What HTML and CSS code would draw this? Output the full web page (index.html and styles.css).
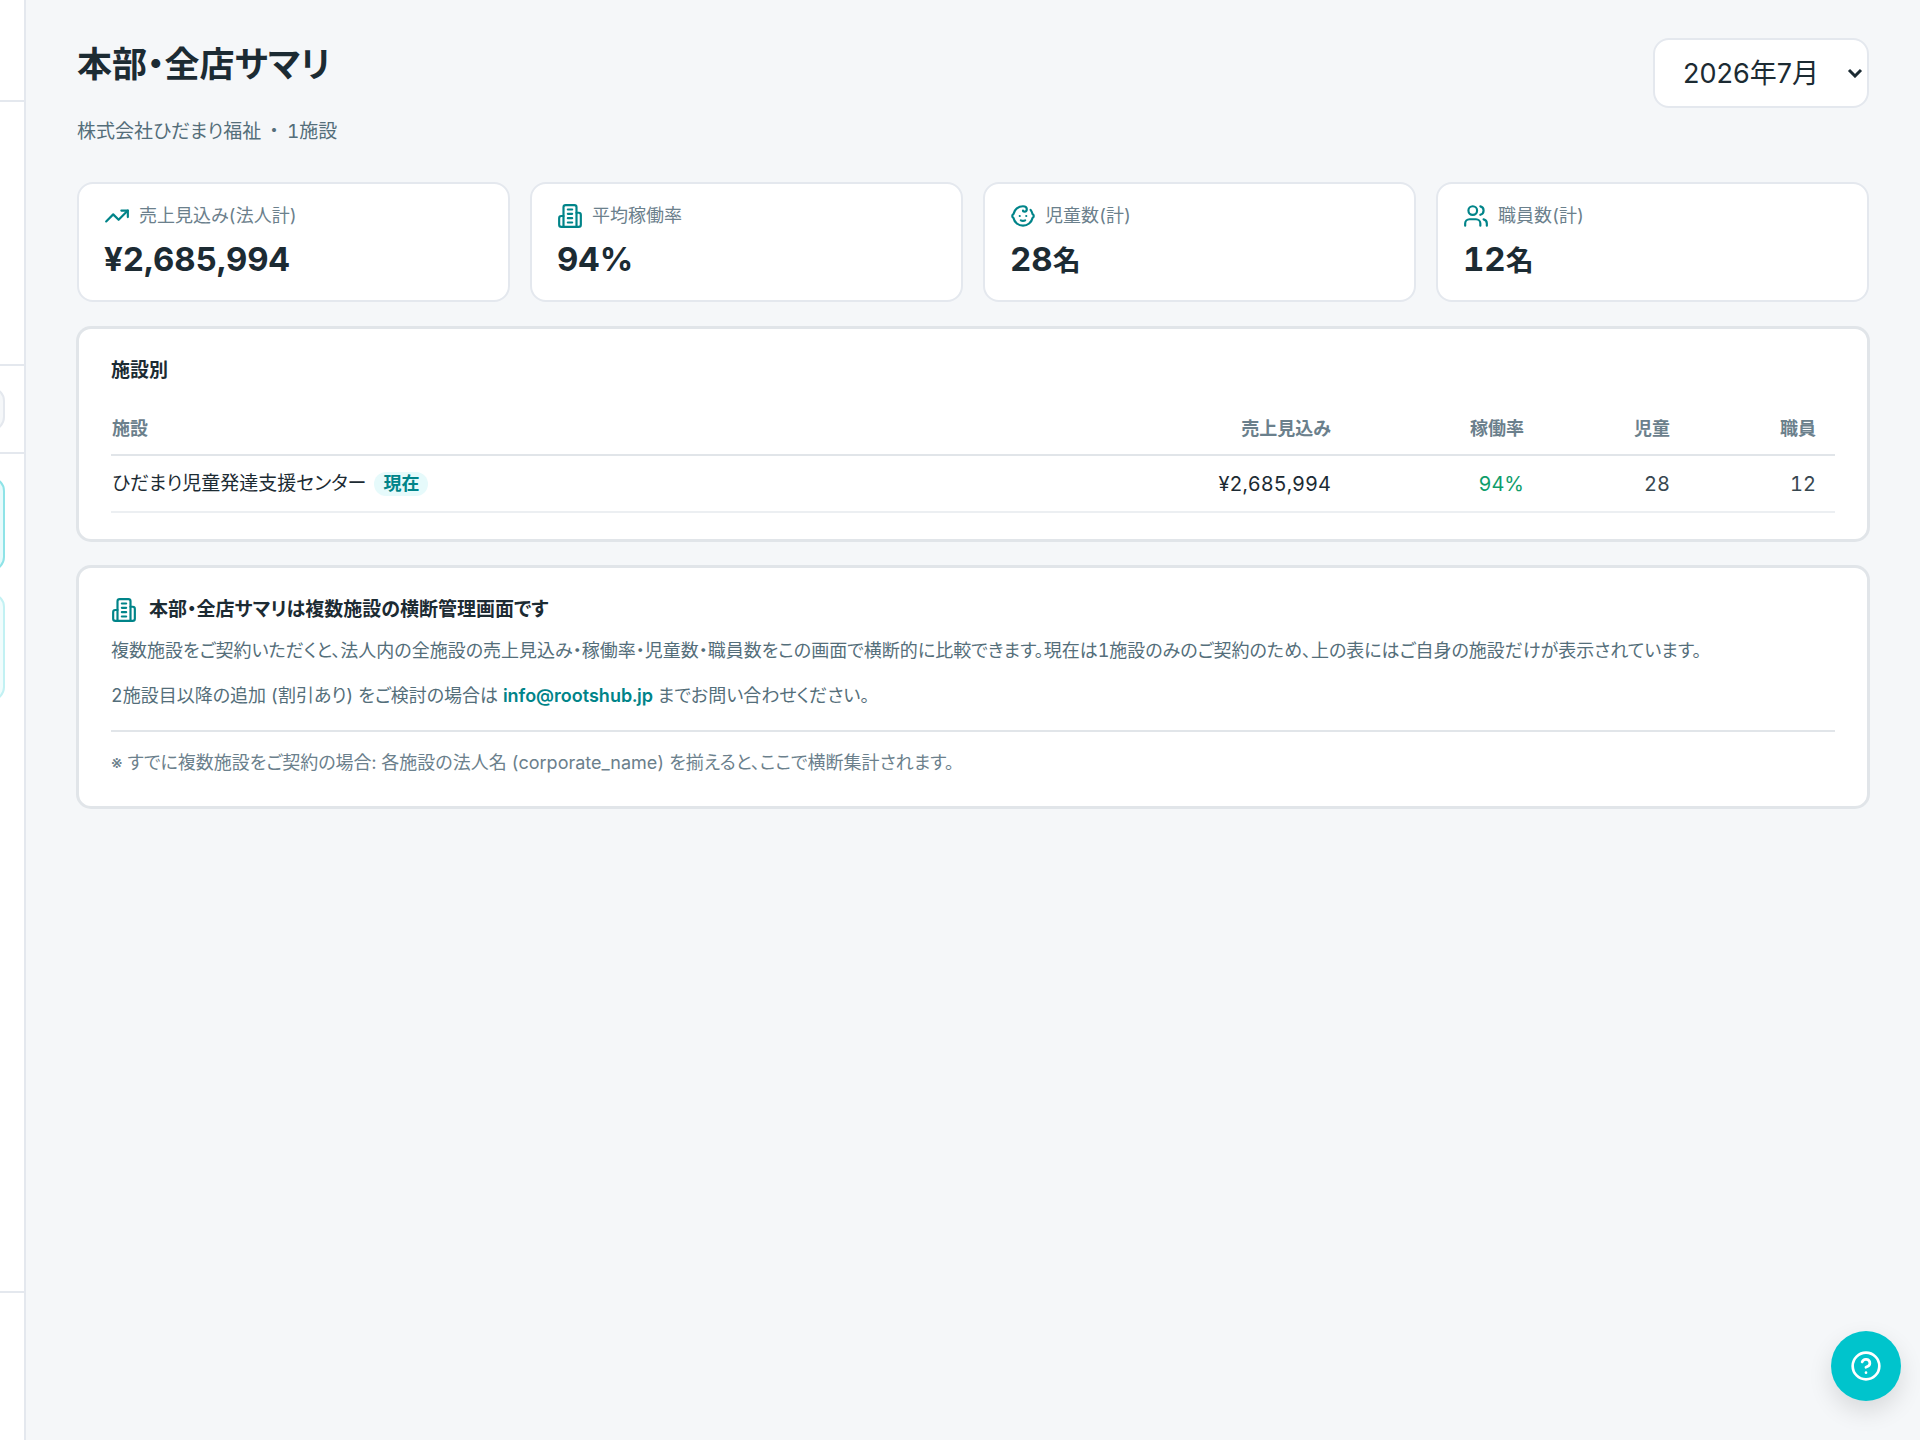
FILE: index.html
```
<!DOCTYPE html>
<html lang="ja">
<head>
    <meta charset="UTF-8">
    <meta name="viewport" content="width=device-width, initial-scale=1.0">
    <title>本部・全店サマリ</title>
    <link rel="stylesheet" href="styles.css">
</head>
<body>
    <!-- Shared icons -->
    <svg class="sprite" aria-hidden="true">
        <symbol id="icon-building" viewBox="0 0 24 24">
            <path d="M6 22V4a2 2 0 0 1 2-2h8a2 2 0 0 1 2 2v18Z"/>
            <path d="M6 12H4a2 2 0 0 0-2 2v6a2 2 0 0 0 2 2h2"/>
            <path d="M18 9h2a2 2 0 0 1 2 2v9a2 2 0 0 1-2 2h-2"/>
            <path d="M10 6h4M10 10h4M10 14h4M10 18h4"/>
        </symbol>
    </svg>

    <div class="layout">
        <!-- Sidebar (collapsed) -->
        <aside class="sidebar">
            <div class="side-section side-brand"></div>
            <div class="side-section side-office"></div>
            <div class="side-section side-search"><div class="side-box"></div></div>
            <div class="side-section side-nav">
                <div class="side-box side-box-active"></div>
                <div class="side-box side-box-soft"></div>
            </div>
            <div class="side-foot"></div>
        </aside>

        <main class="content">
            <header class="page-header">
                <div>
                    <h1>本部・全店サマリ</h1>
                    <p class="subtitle">株式会社ひだまり福祉<span class="separator"> ・ </span>1施設</p>
                </div>
                <div class="month-picker">
                    <select id="month" aria-label="対象月">
                        <option>2026年7月</option>
                    </select>
                    <svg class="month-arrow" viewBox="0 0 16 10" aria-hidden="true"><path d="M2 2l6 6 6-6"/></svg>
                </div>
            </header>

            <!-- Summary cards -->
            <section class="stats">
                <div class="stat">
                    <div class="stat-label">
                        <svg class="icon" viewBox="0 0 24 24"><path d="M16 7h6v6"/><path d="m22 7-8.5 8.5-5-5L2 17"/></svg>
                        <span>売上見込み(法人計)</span>
                    </div>
                    <div class="stat-value">¥2,685,994</div>
                </div>
                <div class="stat">
                    <div class="stat-label">
                        <svg class="icon"><use href="#icon-building"/></svg>
                        <span>平均稼働率</span>
                    </div>
                    <div class="stat-value">94%</div>
                </div>
                <div class="stat">
                    <div class="stat-label">
                        <svg class="icon" viewBox="0 0 24 24"><path d="M9 12h.01"/><path d="M15 12h.01"/><path d="M10 16c.5.3 1.2.5 2 .5s1.5-.2 2-.5"/><path d="M19 6.3a9 9 0 0 1 1.8 3.9 2 2 0 0 1 0 3.6 9 9 0 0 1-17.6 0 2 2 0 0 1 0-3.6A9 9 0 0 1 12 3c2 0 3.5 1.1 3.5 2.5s-.9 2.5-2 2.5c-.8 0-1.5-.4-1.5-1"/></svg>
                        <span>児童数(計)</span>
                    </div>
                    <div class="stat-value">28<span class="unit">名</span></div>
                </div>
                <div class="stat">
                    <div class="stat-label">
                        <svg class="icon" viewBox="0 0 24 24"><path d="M16 21v-2a4 4 0 0 0-4-4H6a4 4 0 0 0-4 4v2"/><circle cx="9" cy="7" r="4"/><path d="M22 21v-2a4 4 0 0 0-3-3.87"/><path d="M16 3.13a4 4 0 0 1 0 7.75"/></svg>
                        <span>職員数(計)</span>
                    </div>
                    <div class="stat-value">12<span class="unit">名</span></div>
                </div>
            </section>

            <!-- Per-facility table -->
            <section class="panel">
                <h2>施設別</h2>
                <table class="facility-table">
                    <thead>
                        <tr>
                            <th class="col-name">施設</th>
                            <th class="col-sales">売上見込み</th>
                            <th class="col-rate">稼働率</th>
                            <th class="col-count">児童</th>
                            <th class="col-count">職員</th>
                        </tr>
                    </thead>
                    <tbody>
                        <tr>
                            <td class="col-name">ひだまり児童発達支援センター<span class="badge">現在</span></td>
                            <td class="sales">¥2,685,994</td>
                            <td class="rate">94%</td>
                            <td>28</td>
                            <td>12</td>
                        </tr>
                    </tbody>
                </table>
            </section>

            <section class="panel">
                <h2 class="notice-title"><svg class="icon"><use href="#icon-building"/></svg>本部・全店サマリは複数施設の横断管理画面です</h2>
                <p class="notice-text">複数施設をご契約いただくと、法人内の全施設の売上見込み・稼働率・児童数・職員数をこの画面で横断的に比較できます。現在は1施設のみのご契約のため、上の表にはご自身の施設だけが表示されています。</p>
                <p class="notice-text">2施設目以降の追加 (割引あり) をご検討の場合は <a href="mailto:info@rootshub.jp">info@rootshub.jp</a> までお問い合わせください。</p>
                <p class="notice-note">※ すでに複数施設をご契約の場合: 各施設の法人名 (corporate_name) を揃えると、ここで横断集計されます。</p>
            </section>
        </main>
    </div>

    <button class="help-button" type="button" aria-label="ヘルプ">
        <svg viewBox="0 0 24 24"><circle cx="12" cy="12" r="10"/><path d="M9.09 9a3 3 0 0 1 5.83 1c0 2-3 3-3 3"/><path d="M12 17h.01"/></svg>
    </button>
</body>
</html>
```
FILE: styles.css
```
* {
    box-sizing: border-box;
}
body {
    margin: 0;
    font-family: Inter, "Noto Sans CJK JP", sans-serif;
    font-feature-settings: "palt";
    font-variant-numeric: tabular-nums;
    font-size: 18px;
    line-height: 28px;
    color: #1c2b33;
    background-color: #f5f7f9;
}
h1, h2, p {
    margin: 0;
}
svg {
    fill: none;
    stroke: currentColor;
    stroke-width: 2;
    stroke-linecap: round;
    stroke-linejoin: round;
}
.sprite {
    position: absolute;
    width: 0;
    height: 0;
}
.icon {
    width: 26px;
    height: 26px;
    flex-shrink: 0;
    color: #008489;
}
.layout {
    display: flex;
    min-height: 100vh;
}

/* Sidebar */
.sidebar {
    display: flex;
    flex-direction: column;
    width: 26px;
    flex-shrink: 0;
    overflow: hidden;
    background-color: #fff;
    border-right: 2px solid #e4e8ee;
}
.side-section {
    border-bottom: 2px solid #e4e8ee;
}
.side-brand {
    height: 102px;
}
.side-office {
    height: 264px;
}
.side-search {
    padding: 21px 0;
}
.side-search .side-box {
    height: 44px;
}
.side-nav {
    flex: 1;
    padding-top: 23px;
}
.side-foot {
    height: 147px;
}
.side-box {
    width: 60px;
    margin-left: -55px;
    border: 2px solid #e4e8ee;
    border-radius: 14px;
    background-color: #f5f7f9;
}
.side-box-active {
    height: 94px;
    margin-bottom: 22px;
    border-color: #8ee3e7;
    background-color: #e6fafb;
}
.side-box-soft {
    height: 108px;
    border-color: #c2f1f3;
    background-color: #f0fcfc;
}

/* Main area */
.content {
    flex: 1;
    min-width: 0;
    padding: 38px 51px;
}
.page-header {
    display: flex;
    justify-content: space-between;
    align-items: flex-start;
    margin-bottom: 36px;
}
h1 {
    font-size: 35px;
    line-height: 52px;
    font-weight: 700;
}
.subtitle {
    margin-top: 28px;
    font-size: 19px;
    color: #546e7a;
}
.separator {
    padding: 0 3px;
}
.month-picker {
    position: relative;
}
.month-picker select {
    appearance: none;
    width: 216px;
    height: 70px;
    padding: 0 48px 0 28px;
    font-family: inherit;
    font-size: 27px;
    color: inherit;
    background-color: #fff;
    border: 2px solid #e4e8ee;
    border-radius: 16px;
}
.month-arrow {
    position: absolute;
    top: 30px;
    right: 6px;
    width: 16px;
    height: 10px;
    stroke-width: 3;
    stroke-linecap: butt;
    stroke-linejoin: miter;
    pointer-events: none;
}

/* Summary cards */
.stats {
    display: grid;
    grid-template-columns: repeat(4, 1fr);
    gap: 20px;
    margin-bottom: 25px;
}
.stat {
    padding: 18px 25px 19px;
    background-color: #fff;
    border: 2px solid #e4e8ee;
    border-radius: 16px;
}
.stat-label {
    display: flex;
    align-items: center;
    gap: 9px;
    color: #6b808c;
}
.stat-value {
    margin-top: 9px;
    font-size: 33px;
    line-height: 40px;
    font-weight: 700;
}
.unit {
    font-size: 28px;
}

/* Panels */
.panel {
    padding: 28px 32px 26px;
    margin-bottom: 25px;
    background-color: #fff;
    border: 2px solid #e1e5e9;
    border-radius: 14px;
    box-shadow: 0 0 0 1px #e1e5e9;
}
.panel h2 {
    font-size: 19px;
    line-height: 28px;
    font-weight: 700;
}
.facility-table {
    width: 100%;
    margin-top: 18px;
    table-layout: fixed;
    border-collapse: collapse;
}
th, td {
    padding: 14px 19px 13px 0;
    text-align: right;
    font-size: 20px;
    color: #37474f;
}
th {
    padding: 12px 19px 11px 0;
    font-size: 18px;
    font-weight: 700;
    color: #6b808c;
    border-bottom: 2px solid #e1e5e9;
}
td {
    border-bottom: 2px solid #eceff2;
}
th.col-name, td.col-name {
    padding-left: 1px;
    text-align: left;
}
td.col-name {
    font-size: 19px;
    color: #1c2b33;
}
.col-sales {
    width: 280px;
}
.col-rate {
    width: 193px;
}
.col-count {
    width: 146px;
}
.sales {
    color: #1c2b33;
}
td.rate {
    color: #0f9d6b;
}
.badge {
    display: inline-block;
    margin-left: 8px;
    padding: 0 9px;
    font-size: 18px;
    line-height: 24px;
    font-weight: 700;
    color: #008489;
    background-color: #e6fafb;
    border-radius: 12px;
}

/* Notice */
.notice-title {
    display: flex;
    align-items: center;
    gap: 12px;
    margin-bottom: 13px;
}
.notice-text {
    margin-bottom: 17px;
    color: #546e7a;
}
.notice-text a {
    font-weight: 600;
    color: #008489;
    text-decoration: none;
}
.notice-note {
    margin-top: 20px;
    padding: 17px 0 3px;
    border-top: 2px solid #e1e5e9;
    color: #6b808c;
}

/* Help button */
.help-button {
    position: fixed;
    right: 19px;
    bottom: 39px;
    display: flex;
    align-items: center;
    justify-content: center;
    width: 70px;
    height: 70px;
    padding: 0;
    color: #fff;
    background-color: #00c4cc;
    border: none;
    border-radius: 50%;
    box-shadow: 0 10px 24px rgba(0, 0, 0, 0.12);
    cursor: pointer;
}
.help-button svg {
    width: 32px;
    height: 32px;
}
```
